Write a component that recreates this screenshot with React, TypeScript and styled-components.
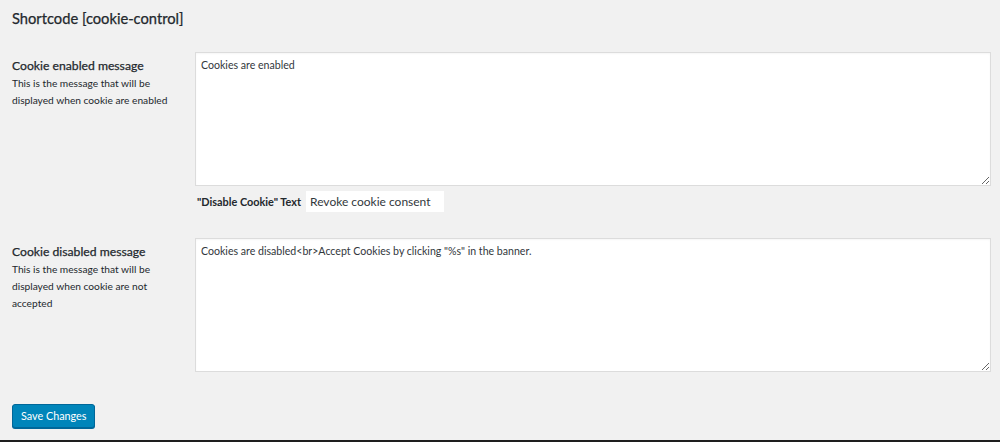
import React from "react";
import styled, { createGlobalStyle } from "styled-components";

const GlobalStyle = createGlobalStyle`
  html, body {
    margin: 0;
    padding: 0;
    background: #f1f1f1;
  }
  body {
    font-family: Lato, "Noto Sans", sans-serif;
    color: #23282d;
  }
`;

const Page = styled.div`
  box-sizing: border-box;
  height: 442px;
  padding: 0 9px 0 12px;
  background: #f1f1f1;
  border-bottom: 2px solid #1e1e1e;
`;

const Heading = styled.h2`
  margin: 0;
  padding-top: 10px;
  font-size: 14.7px;
  font-weight: 400;
  line-height: 17px;
  color: #23282d;
  -webkit-text-stroke: 0.25px #23282d;
`;

const FormTable = styled.div`
  display: grid;
  grid-template-columns: 183px 1fr;
  margin-top: 25px;
`;

const LabelCell = styled.div`
  padding-top: 6px;
`;

const FieldLabel = styled.div`
  font-size: 12.2px;
  font-weight: 400;
  line-height: 16px;
  color: #23282d;
  -webkit-text-stroke: 0.25px #23282d;
`;

const Description = styled.div`
  margin-top: 1px;
  font-size: 10.2px;
  line-height: 17px;
  color: #23282d;
`;

const FieldCell = styled.div<{ $last?: boolean }>`
  padding-bottom: ${(p) => (p.$last ? "0" : "25px")};
`;

const TextArea = styled.textarea`
  display: block;
  box-sizing: border-box;
  width: 100%;
  height: 134px;
  margin: 0;
  padding: 4px 5px;
  border: 1px solid #dcdcdc;
  box-shadow: inset 0 1px 2px rgba(0, 0, 0, 0.04);
  background: #fff;
  font-family: Lato, "Noto Sans", sans-serif;
  font-size: 10.6px;
  line-height: 16px;
  color: #32373c;
  resize: vertical;
  outline: none;
`;

const InlineRow = styled.div`
  display: flex;
  align-items: center;
  gap: 4px;
  margin-top: 4px;
  padding-left: 2px;
`;

const InlineLabel = styled.label`
  font-size: 10.9px;
  font-weight: 700;
  color: #23282d;
`;

const TextInput = styled.input`
  box-sizing: border-box;
  width: 140px;
  height: 23px;
  margin: 0;
  padding: 0 4px;
  border: 1px solid #f1f1f1;
  background: #fff;
  font-family: Lato, "Noto Sans", sans-serif;
  font-size: 12px;
  color: #32373c;
  outline: none;
`;

const Footer = styled.div`
  padding-top: 32px;
`;

const PrimaryButton = styled.button`
  box-sizing: border-box;
  height: 24px;
  padding: 0 8px;
  border: 1px solid #006799;
  border-radius: 3px;
  background: #0085ba;
  box-shadow: 0 1px 0 #006799;
  color: #fff;
  font-family: Lato, "Noto Sans", sans-serif;
  font-size: 10.8px;
  line-height: 22px;
  cursor: pointer;
`;

export default function App() {
  return (
    <>
      <GlobalStyle />
      <Page>
        <Heading>Shortcode [cookie-control]</Heading>
        <FormTable>
          <LabelCell>
            <FieldLabel>Cookie enabled message</FieldLabel>
            <Description>
              This is the message that will be
              <br />
              displayed when cookie are enabled
            </Description>
          </LabelCell>
          <FieldCell>
            <TextArea defaultValue="Cookies are enabled" />
            <InlineRow>
              <InlineLabel>"Disable Cookie" Text</InlineLabel>
              <TextInput defaultValue="Revoke cookie consent" />
            </InlineRow>
          </FieldCell>

          <LabelCell>
            <FieldLabel>Cookie disabled message</FieldLabel>
            <Description>
              This is the message that will be
              <br />
              displayed when cookie are not
              <br />
              accepted
            </Description>
          </LabelCell>
          <FieldCell $last>
            <TextArea defaultValue={'Cookies are disabled<br>Accept Cookies by clicking "%s" in the banner.'} />
          </FieldCell>
        </FormTable>
        <Footer>
          <PrimaryButton type="button">Save Changes</PrimaryButton>
        </Footer>
      </Page>
    </>
  );
}
